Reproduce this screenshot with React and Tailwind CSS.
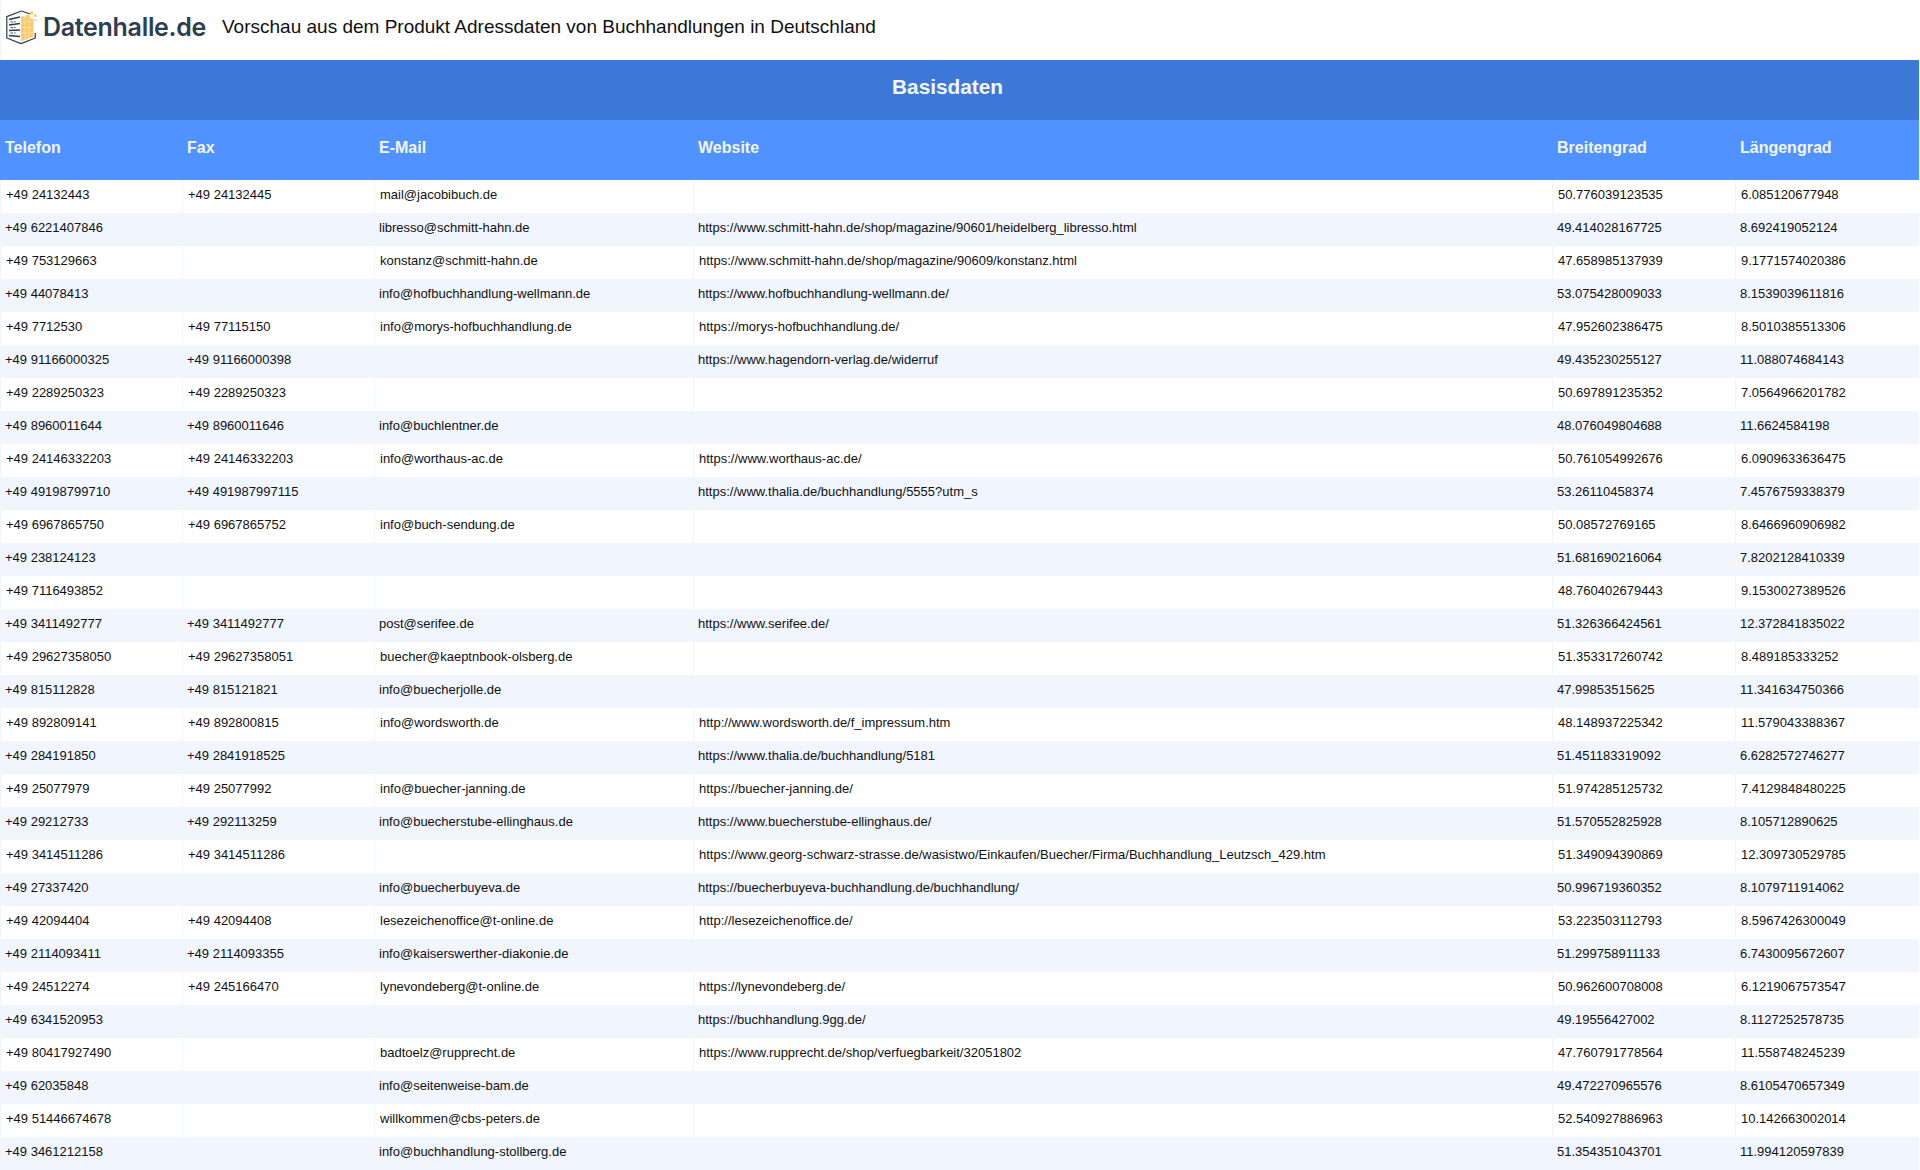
const columns = [
  { label: "Telefon", width: "w-[182px]" },
  { label: "Fax", width: "w-[192px]" },
  { label: "E-Mail", width: "w-[319px]" },
  { label: "Website", width: "w-[859px]" },
  { label: "Breitengrad", width: "w-[183px]" },
  { label: "Längengrad", width: "w-[184px]" },
];

const rows = [
  ["+49 24132443", "+49 24132445", "mail@jacobibuch.de", "", "50.776039123535", "6.085120677948"],
  ["+49 6221407846", "", "libresso@schmitt-hahn.de", "https://www.schmitt-hahn.de/shop/magazine/90601/heidelberg_libresso.html", "49.414028167725", "8.692419052124"],
  ["+49 753129663", "", "konstanz@schmitt-hahn.de", "https://www.schmitt-hahn.de/shop/magazine/90609/konstanz.html", "47.658985137939", "9.1771574020386"],
  ["+49 44078413", "", "info@hofbuchhandlung-wellmann.de", "https://www.hofbuchhandlung-wellmann.de/", "53.075428009033", "8.1539039611816"],
  ["+49 7712530", "+49 77115150", "info@morys-hofbuchhandlung.de", "https://morys-hofbuchhandlung.de/", "47.952602386475", "8.5010385513306"],
  ["+49 91166000325", "+49 91166000398", "", "https://www.hagendorn-verlag.de/widerruf", "49.435230255127", "11.088074684143"],
  ["+49 2289250323", "+49 2289250323", "", "", "50.697891235352", "7.0564966201782"],
  ["+49 8960011644", "+49 8960011646", "info@buchlentner.de", "", "48.076049804688", "11.6624584198"],
  ["+49 24146332203", "+49 24146332203", "info@worthaus-ac.de", "https://www.worthaus-ac.de/", "50.761054992676", "6.0909633636475"],
  ["+49 49198799710", "+49 491987997115", "", "https://www.thalia.de/buchhandlung/5555?utm_s", "53.26110458374", "7.4576759338379"],
  ["+49 6967865750", "+49 6967865752", "info@buch-sendung.de", "", "50.08572769165", "8.6466960906982"],
  ["+49 238124123", "", "", "", "51.681690216064", "7.8202128410339"],
  ["+49 7116493852", "", "", "", "48.760402679443", "9.1530027389526"],
  ["+49 3411492777", "+49 3411492777", "post@serifee.de", "https://www.serifee.de/", "51.326366424561", "12.372841835022"],
  ["+49 29627358050", "+49 29627358051", "buecher@kaeptnbook-olsberg.de", "", "51.353317260742", "8.489185333252"],
  ["+49 815112828", "+49 815121821", "info@buecherjolle.de", "", "47.99853515625", "11.341634750366"],
  ["+49 892809141", "+49 892800815", "info@wordsworth.de", "http://www.wordsworth.de/f_impressum.htm", "48.148937225342", "11.579043388367"],
  ["+49 284191850", "+49 2841918525", "", "https://www.thalia.de/buchhandlung/5181", "51.451183319092", "6.6282572746277"],
  ["+49 25077979", "+49 25077992", "info@buecher-janning.de", "https://buecher-janning.de/", "51.974285125732", "7.4129848480225"],
  ["+49 29212733", "+49 292113259", "info@buecherstube-ellinghaus.de", "https://www.buecherstube-ellinghaus.de/", "51.570552825928", "8.105712890625"],
  ["+49 3414511286", "+49 3414511286", "", "https://www.georg-schwarz-strasse.de/wasistwo/Einkaufen/Buecher/Firma/Buchhandlung_Leutzsch_429.htm", "51.349094390869", "12.309730529785"],
  ["+49 27337420", "", "info@buecherbuyeva.de", "https://buecherbuyeva-buchhandlung.de/buchhandlung/", "50.996719360352", "8.1079711914062"],
  ["+49 42094404", "+49 42094408", "lesezeichenoffice@t-online.de", "http://lesezeichenoffice.de/", "53.223503112793", "8.5967426300049"],
  ["+49 2114093411", "+49 2114093355", "info@kaiserswerther-diakonie.de", "", "51.299758911133", "6.7430095672607"],
  ["+49 24512274", "+49 245166470", "lynevondeberg@t-online.de", "https://lynevondeberg.de/", "50.962600708008", "6.1219067573547"],
  ["+49 6341520953", "", "", "https://buchhandlung.9gg.de/", "49.19556427002", "8.1127252578735"],
  ["+49 80417927490", "", "badtoelz@rupprecht.de", "https://www.rupprecht.de/shop/verfuegbarkeit/32051802", "47.760791778564", "11.558748245239"],
  ["+49 62035848", "", "info@seitenweise-bam.de", "", "49.472270965576", "8.6105470657349"],
  ["+49 51446674678", "", "willkommen@cbs-peters.de", "", "52.540927886963", "10.142663002014"],
  ["+49 3461212158", "", "info@buchhandlung-stollberg.de", "", "51.354351043701", "11.994120597839"],
];

function Logo() {
  return (
    <svg width="32" height="36" viewBox="0 0 32 36" className="shrink-0">
      {/* hexagon, left half dark outline, right half open towards the cubes */}
      <path d="M15.5 2 L0.8 7.6 V29 L15 34.6 L29.3 29 V24" fill="none" stroke="#2c3e50" strokeWidth="1.2" strokeLinejoin="round" />
      <path d="M15.5 2 L24 5" fill="none" stroke="#2c3e50" strokeWidth="1.2" />
      {/* server rows */}
      <path d="M3 10.5 L14 8 M3 16 L14 14.5 M3 21.5 L14 21 M3 26.5 L14 27.5" stroke="#2c3e50" strokeWidth="1.4" />
      <path d="M4.5 13h2.5M8 12.8h1.5M4.5 18.6h2.5M8 18.4h1.5M4.5 24h2.5M8 24h1.5" stroke="#2c3e50" strokeWidth="0.9" />
      {/* cubes */}
      <path d="M15 7 L20 8 V6 L24 6.5 V9 L27.5 10 V27.5 L15 32.5 Z" fill="#f9c96b" />
      <path d="M19 7v24M23 7v22.5M15 13h12.5M15 18.5h12.5M15 24h12.5" stroke="#fde4b0" strokeWidth="0.7" />
      <rect x="24" y="2.5" width="3" height="3" fill="#f9c96b" />
      <rect x="28" y="5.5" width="2.5" height="2.5" fill="#f9c96b" />
      <rect x="28.5" y="10" width="2" height="2" fill="#fbd68f" />
    </svg>
  );
}

export default function App() {
  return (
    <div className="w-[1919px] bg-white font-['Liberation_Sans',Arial,sans-serif] text-black">
      <div className="flex h-[60px] items-start border-l border-[#f0f4fb] pl-[5px] pt-[9px]">
        <Logo />
        <span className="ml-[5px] w-[172px] shrink-0 font-['Inter',sans-serif] text-[25px] leading-[36px] font-semibold tracking-[-0.3px] text-[#2c3e50]">
          Datenhalle.de
        </span>
        <h1 className="ml-[7px] text-[19px] leading-[36px] font-normal text-[#111]">
          Vorschau aus dem Produkt Adressdaten von Buchhandlungen in Deutschland
        </h1>
      </div>
      <table className="w-[1919px] table-fixed border-separate border-spacing-0 text-[13px] leading-[16px]">
        <colgroup>
          {columns.map((col) => (
            <col key={col.label} className={col.width} />
          ))}
        </colgroup>
        <thead>
          <tr className="h-[60px] bg-[#3d78d8]">
            <th colSpan={6} className="pr-[24px] pb-[6px] text-center text-[20.8px] leading-[24px] font-bold text-[#f3f7ff]">
              Basisdaten
            </th>
          </tr>
          <tr className="h-[60px] bg-[#5092ff]">
            {columns.map((col) => (
              <th key={col.label} className="pb-[5px] pl-[5px] text-left text-[16px] leading-[20px] font-bold text-[#f3f7ff]">
                {col.label}
              </th>
            ))}
          </tr>
        </thead>
        <tbody>
          {rows.map((row, index) => (
            <tr key={index} className="h-[33px] odd:bg-white even:bg-[#f0f5fe]">
              {row.map((value, cell) => (
                <td
                  key={cell}
                  className={
                    index % 2 === 0
                      ? "overflow-hidden border-l border-[#f0f4fb] pb-[4px] pl-[5px] whitespace-nowrap text-[#111]"
                      : "overflow-hidden pb-[4px] pl-[5px] whitespace-nowrap text-[#111]"
                  }
                >
                  {value}
                </td>
              ))}
            </tr>
          ))}
        </tbody>
      </table>
    </div>
  );
}
